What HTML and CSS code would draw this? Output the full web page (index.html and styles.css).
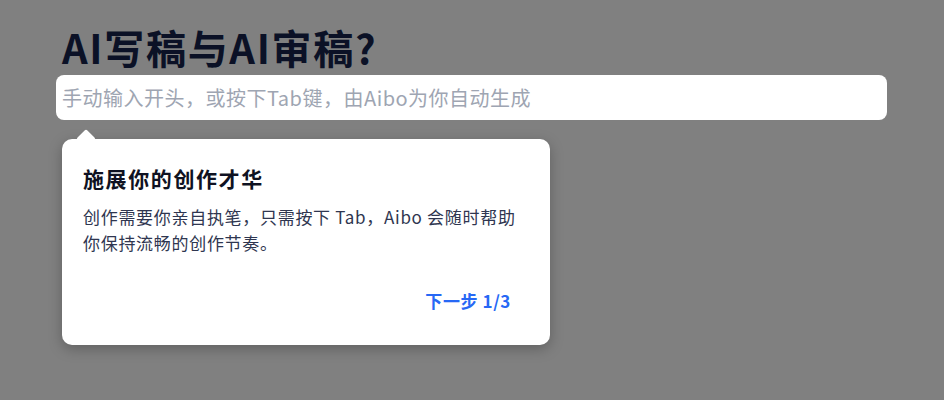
FILE: index.html
```html
<html>

<head>
    <title>Aibo</title>
    <link rel="stylesheet" href="styles.css">
</head>

<body>
    <div id="page">
        <h1 class="title">AI写稿与AI审稿?</h1>
        <div class="prompt">
            <input class="prompt-input" type="text" placeholder="手动输入开头，或按下Tab键，由Aibo为你自动生成">
        </div>
        <div class="tour">
            <div class="tour-arrow"></div>
            <h2 class="tour-title">施展你的创作才华</h2>
            <p class="tour-text">创作需要你亲自执笔，只需按下 Tab，Aibo 会随时帮助你保持流畅的创作节奏。</p>
            <div class="tour-footer">
                <button class="tour-next">下一步 1/3</button>
            </div>
        </div>
    </div>
</body>

</html>
```

FILE: styles.css
```css
body {
    margin: 0;
    background-color: #808080;
    font-family: "Noto Sans CJK SC", "Noto Sans", sans-serif;
    overflow: hidden;
}

#page {
    padding: 19px 57px 0 56px;
}

.title {
    margin: 0 0 0 6px;
    font-size: 40px;
    line-height: 56px;
    letter-spacing: 1.7px;
    font-weight: 700;
    color: #0b1126;
}

.prompt {
    background-color: #fff;
    border-radius: 8px;
    height: 45px;
    display: flex;
    align-items: center;
}

.prompt-input {
    border: none;
    outline: none;
    background: transparent;
    width: 100%;
    padding: 0 6px;
    font-family: inherit;
    font-size: 20px;
    letter-spacing: 0.5px;
    color: #333;
}

.prompt-input::placeholder {
    color: #9ea5b2;
}

.tour {
    position: relative;
    margin: 19px 0 0 6px;
    width: 488px;
    box-sizing: border-box;
    padding: 20px 24px 26px 21px;
    background-color: #fff;
    border-radius: 10px;
    box-shadow: 0 4px 14px rgba(0, 0, 0, 0.25);
}

.tour-arrow {
    position: absolute;
    top: -7px;
    left: 17px;
    width: 14px;
    height: 14px;
    background-color: #fff;
    transform: rotate(45deg);
    border-radius: 2px;
}

.tour-title {
    margin: 0;
    font-size: 21px;
    line-height: 38px;
    letter-spacing: 1.6px;
    font-weight: 700;
    color: #0f1222;
}

.tour-text {
    margin: 7px 0 0;
    font-size: 17px;
    line-height: 26px;
    letter-spacing: 0.7px;
    color: #2f3650;
}

.tour-footer {
    display: flex;
    justify-content: flex-end;
    margin-top: 27px;
}

.tour-next {
    border: none;
    background: none;
    padding: 6px 15px 6px 14px;
    font-family: inherit;
    font-size: 17px;
    line-height: 24px;
    letter-spacing: 0.6px;
    font-weight: 700;
    color: #2768f5;
    cursor: pointer;
}
```
